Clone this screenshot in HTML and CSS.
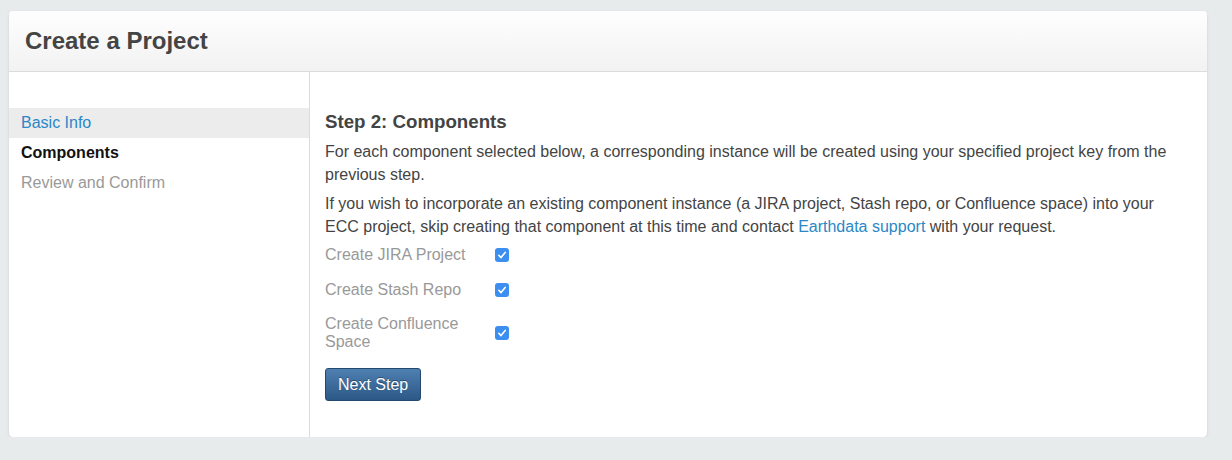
FILE: index.html
```html
<!DOCTYPE html>
<html lang="en">
<head>
    <meta charset="UTF-8">
    <title>Create a Project</title>
    <link rel="stylesheet" href="styles.css">
</head>
<body>
    <div class="panel">
        <div class="panel-header">
            <h1>Create a Project</h1>
        </div>
        <div class="panel-body">
            <ul class="steps">
                <li class="step done"><a href="#">Basic Info</a></li>
                <li class="step current">Components</li>
                <li class="step todo">Review and Confirm</li>
            </ul>

            <div class="step-content">
                <h2>Step 2: Components</h2>
                <p>For each component selected below, a corresponding instance will be created using your specified project key from the previous step.</p>
                <p>If you wish to incorporate an existing component instance (a JIRA project, Stash repo, or Confluence space) into your ECC project, skip creating that component at this time and contact <a href="#">Earthdata support</a> with your request.</p>

                <div class="option">
                    <span class="option-label">Create JIRA Project</span>
                    <span class="check"><svg viewBox="0 0 14 14" width="14" height="14"><path d="M3.8 7.3 L6 9.6 L10.2 4.4" fill="none" stroke="#fff" stroke-width="1.6" stroke-linecap="round" stroke-linejoin="round"/></svg></span>
                </div>
                <div class="option">
                    <span class="option-label">Create Stash Repo</span>
                    <span class="check"><svg viewBox="0 0 14 14" width="14" height="14"><path d="M3.8 7.3 L6 9.6 L10.2 4.4" fill="none" stroke="#fff" stroke-width="1.6" stroke-linecap="round" stroke-linejoin="round"/></svg></span>
                </div>
                <div class="option">
                    <span class="option-label">Create Confluence Space</span>
                    <span class="check"><svg viewBox="0 0 14 14" width="14" height="14"><path d="M3.8 7.3 L6 9.6 L10.2 4.4" fill="none" stroke="#fff" stroke-width="1.6" stroke-linecap="round" stroke-linejoin="round"/></svg></span>
                </div>

                <button class="btn-primary">Next Step</button>
            </div>
        </div>
    </div>
</body>
</html>
```

FILE: styles.css
```css
body {
    margin: 0;
    padding: 11px 25px 0 9px;
    background-color: #e8ebec;
    font-family: "Liberation Sans", Arial, sans-serif;
    color: #333;
}
.panel {
    background: #fff;
    border-radius: 4px;
    box-shadow: 0 1px 3px rgba(0,0,0,0.12);
    overflow: hidden;
}
.panel-header {
    height: 60px;
    background: linear-gradient(#fefefe, #f2f2f2);
    border-bottom: 1px solid #dcdcdc;
    display: flex;
    align-items: center;
    padding-left: 16px;
}
h1 {
    margin: 0;
    font-size: 24px;
    font-weight: bold;
    color: #444;
}
.panel-body {
    display: flex;
    height: 365px;
}
.steps {
    list-style: none;
    margin: 0;
    padding: 36px 0 0 0;
    width: 300px;
    border-right: 1px solid #dcdcdc;
}
.step {
    height: 30px;
    line-height: 30px;
    padding-left: 12px;
    font-size: 16px;
}
.step.done {
    background-color: #ececec;
}
.step.done a {
    color: #2b87c6;
    text-decoration: none;
}
.step.current {
    font-weight: bold;
    color: #111;
}
.step.todo {
    color: #999;
}
.step-content {
    flex: 1;
    padding: 39px 16px 0 15px;
}
h2 {
    margin: 0 0 8px 0;
    font-size: 18.7px;
    line-height: 22px;
    color: #444;
}
p {
    margin: 0 0 7px 0;
    font-size: 16px;
    line-height: 22.5px;
    color: #444;
}
p a {
    color: #2b87c6;
    text-decoration: none;
}
.option {
    display: flex;
    align-items: center;
    margin-top: 8px;
    margin-bottom: 17px;
}
.option + .option {
    margin-top: 0;
}
.option:nth-of-type(2) {
    margin-bottom: 16px;
}
.option-label {
    width: 150px;
    margin-right: 20px;
    font-size: 16px;
    line-height: 18px;
    color: #999;
}
.check {
    width: 14px;
    height: 14px;
    border-radius: 3px;
    background-color: #3c8ef0;
    display: flex;
}
.btn-primary {
    margin-top: 0;
    height: 33px;
    padding: 0 12px;
    font-family: "Liberation Sans", Arial, sans-serif;
    font-size: 16px;
    color: #fff;
    background: linear-gradient(#4e80b1, #2c5886);
    border: 1px solid #24486e;
    border-radius: 3px;
    text-shadow: 0 -1px 0 rgba(0,0,0,0.35);
    cursor: pointer;
}
```
